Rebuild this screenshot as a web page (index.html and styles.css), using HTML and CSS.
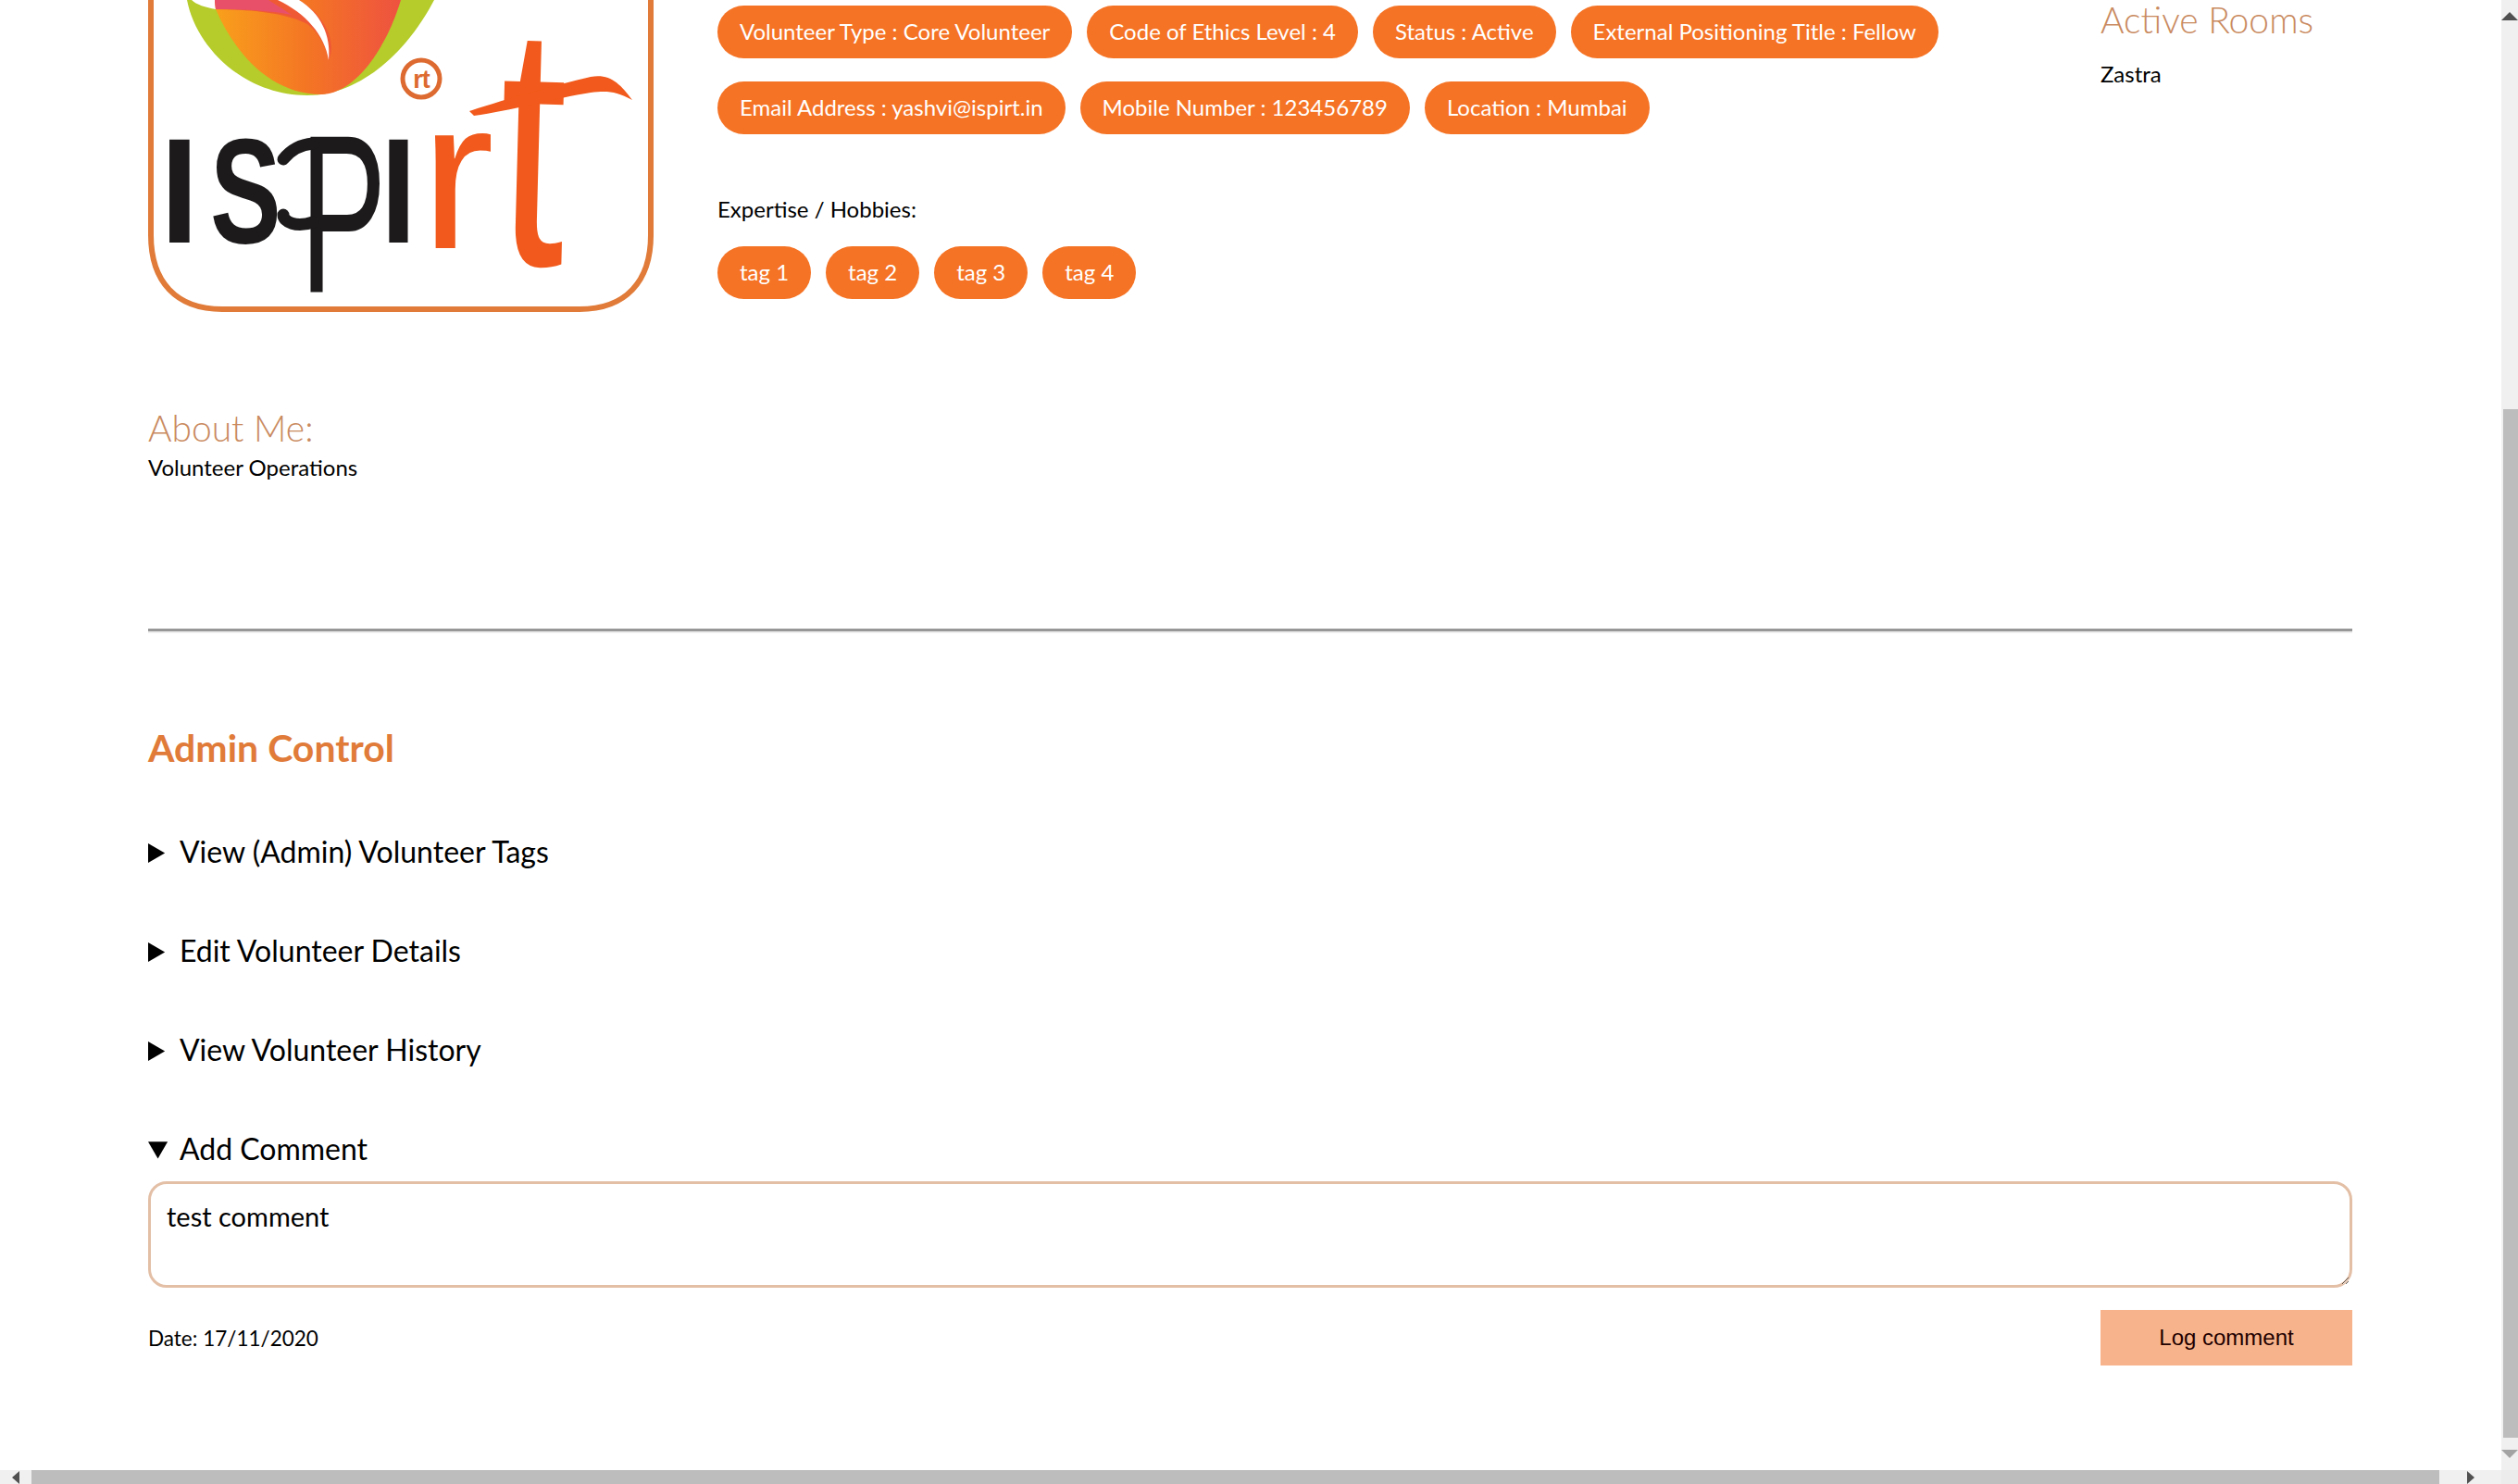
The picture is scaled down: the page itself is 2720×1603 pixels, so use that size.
FILE: index.html
```html
<!DOCTYPE html>
<html lang="en">
<head>
  <meta charset="UTF-8">
  <title>Volunteer Profile</title>
  <link rel="stylesheet" href="styles.css">
</head>
<body>

  <div class="window">
    <div class="viewport">
      <main class="page">

        <!-- Profile header -->
        <section class="profile">
          <svg class="logo" viewBox="0 0 546 337" aria-label="iSPIRT logo">
            <defs>
              <linearGradient id="petal" x1="0" y1="0" x2="1" y2="0">
                <stop offset="0" stop-color="#f9a01b"/>
                <stop offset="0.5" stop-color="#f47524"/>
                <stop offset="1" stop-color="#ee5240"/>
              </linearGradient>
            </defs>
            <path class="logo-frame" d="M3 -20 V254 C3 304 30 334 80 334 H466 C516 334 543 304 543 254 V-20"/>
            <path class="logo-green" d="M42 0 C52 52 104 103 172 103 C232 103 282 52 309 0 Z"/>
            <path class="logo-white" d="M47 0 C52 5 62 8 73 10 L82 0 Z"/>
            <path fill="url(#petal)" d="M72 0 L73 10 C92 54 130 102 187 102 C225 101 258 50 273 0 Z"/>
            <path class="logo-red" d="M72 0 L73 10 C110 10 150 14 172 26 C186 36 192 52 195 65 C205 45 190 16 163 0 Z"/>
            <path class="logo-pink" d="M72 0 L73 10 C100 10 130 11 155 16 L130 0 Z"/>
            <path class="logo-white" d="M140 0 C170 14 191 38 195 65 C198 38 186 14 163 0 Z"/>

            <circle class="logo-ring" cx="295" cy="85" r="20"/>
            <text class="logo-mark" x="295" y="95" text-anchor="middle">rt</text>

            <text class="logo-black" transform="translate(13 262) scale(1.5 1.62)">I</text>
            <text class="logo-black" transform="translate(67 262) scale(1.15 1.62)">S</text>
            <text class="logo-thin" transform="translate(164 315) scale(1.4 2.43)">P</text>
            <path class="logo-hook" d="M146 172 C154 162 166 156 178 155"/>
            <path class="logo-hook" d="M146 232 C146 240 160 246 178 240"/>
            <text class="logo-black" transform="translate(251 262) scale(1.4 1.62)">I</text>
            <text class="logo-orange" transform="translate(294 268) scale(2.4 2.3)">r</text>
            <text class="logo-orange" transform="translate(376 285) rotate(1.5) scale(2.6 3.74)">t</text>
            <path class="logo-swoosh" d="M347 120 C390 106 440 92 478 83 C498 79 510 90 523 108 C505 98 495 98 478 100 C440 106 390 120 352 125 Z"/>
          </svg>

          <div class="info">
            <div class="pills">
              <span class="pill">Volunteer Type : Core Volunteer</span>
              <span class="pill">Code of Ethics Level : 4</span>
              <span class="pill">Status : Active</span>
              <span class="pill">External Positioning Title : Fellow</span>
            </div>
            <div class="pills">
              <span class="pill">Email Address : yashvi@ispirt.in</span>
              <span class="pill">Mobile Number : 123456789</span>
              <span class="pill">Location : Mumbai</span>
            </div>
            <p class="expertise">Expertise / Hobbies:</p>
            <div class="pills">
              <span class="pill">tag 1</span>
              <span class="pill">tag 2</span>
              <span class="pill">tag 3</span>
              <span class="pill">tag 4</span>
            </div>
          </div>

          <aside class="rooms">
            <h3 class="light-title rooms-title">Active Rooms</h3>
            <p>Zastra</p>
          </aside>
        </section>

        <!-- About -->
        <section class="about">
          <h3 class="light-title">About Me:</h3>
          <p>Volunteer Operations</p>
        </section>

        <hr class="divider">

        <!-- Admin -->
        <section class="admin">
          <h2>Admin Control</h2>
          <details><summary>View (Admin) Volunteer Tags</summary></details>
          <details><summary>Edit Volunteer Details</summary></details>
          <details><summary>View Volunteer History</summary></details>
          <details open>
            <summary>Add Comment</summary>
            <textarea class="comment-box" rows="2">test comment</textarea>
            <div class="comment-foot">
              <span class="comment-date">Date: 17/11/2020</span>
              <button class="log-btn">Log comment</button>
            </div>
          </details>
        </section>

      </main>

      <div class="vscroll">
        <div class="arrow-box"><span class="arrow up"></span></div>
        <div class="vspace"></div>
        <div class="vthumb"></div>
        <div class="arrow-box"><span class="arrow down"></span></div>
      </div>
    </div>

    <div class="hscroll">
      <div class="harrow"><span class="arrow left"></span></div>
      <div class="hthumb"></div>
      <div class="harrow wide"><span class="arrow right"></span></div>
      <div class="corner"></div>
    </div>
  </div>

</body>
</html>
```

FILE: styles.css
```css
* {
  box-sizing: border-box;
}
html, body {
  margin: 0;
  padding: 0;
  height: 100%;
  overflow: hidden;
}
body {
  font-family: Lato, 'Open Sans', sans-serif;
  font-size: 24px;
  color: #000;
  background: #fff;
}
p {
  margin: 0;
}

/* Window and scrollbars */
.window {
  display: flex;
  flex-direction: column;
  height: 1603px;
}
.viewport {
  display: flex;
  height: 1588px;
}
.page {
  width: 2702px;
  padding: 0 161px 0 160px;
  overflow: hidden;
}
.vscroll {
  width: 18px;
  display: flex;
  flex-direction: column;
  background: #f0f0f0;
}
.vspace {
  height: 407px;
}
.vthumb {
  flex: 1;
  margin-left: 2px;
  background: #bdbdbd;
}
.arrow-box {
  height: 35px;
  display: flex;
  align-items: center;
  justify-content: center;
}
.hscroll {
  height: 15px;
  display: flex;
  background: #f0f0f0;
}
.harrow {
  width: 34px;
  display: flex;
  align-items: center;
  justify-content: center;
}
.harrow.wide {
  width: 67px;
}
.hthumb {
  width: 2601px;
  background: #bdbdbd;
}
.corner {
  width: 18px;
  background: #ececec;
}
.arrow {
  width: 0;
  height: 0;
  border-style: solid;
  border-color: transparent;
}
.arrow.up {
  border-width: 0 9px 9px;
  border-bottom-color: #505050;
}
.arrow.down {
  border-width: 9px 9px 0;
  border-top-color: #a3a3a3;
}
.arrow.left {
  border-width: 7px 8px 7px 0;
  border-right-color: #505050;
}
.arrow.right {
  border-width: 7px 0 7px 8px;
  border-left-color: #505050;
}

/* Profile header */
.profile {
  display: flex;
  align-items: flex-start;
}
.logo {
  width: 546px;
  height: 337px;
  flex: none;
  display: block;
}
.logo-frame {
  fill: none;
  stroke: #e07b39;
  stroke-width: 6;
}
.logo-green {
  fill: #b5cc2a;
}
.logo-white {
  fill: #fff;
}
.logo-red {
  fill: #ef5a35;
}
.logo-pink {
  fill: #e8506a;
}
.logo-ring {
  fill: none;
  stroke: #dd6a30;
  stroke-width: 5;
}
.logo-mark {
  font-family: 'Liberation Sans', sans-serif;
  font-size: 27px;
  font-weight: 700;
  letter-spacing: -1px;
  fill: #dd6a30;
}
.logo-black {
  font-family: 'Liberation Sans', sans-serif;
  font-size: 100px;
  font-weight: 700;
  fill: #1c1a1a;
}
.logo-thin {
  font-family: 'Liberation Sans', sans-serif;
  font-size: 100px;
  fill: #1c1a1a;
}
.logo-hook {
  fill: none;
  stroke: #1c1a1a;
  stroke-width: 13;
  stroke-linecap: round;
}
.logo-orange {
  font-family: 'Liberation Sans', sans-serif;
  font-size: 100px;
  fill: #f15a1c;
}
.logo-swoosh {
  fill: #f15a1c;
}
.info {
  margin-left: 69px;
  padding-top: 6px;
  width: 1494px;
}
.pills {
  display: flex;
  gap: 16px;
  margin-bottom: 25px;
}
.pill {
  background: #f57325;
  color: #fff;
  height: 57px;
  line-height: 56px;
  padding: 0 24px;
  border-radius: 29px;
  white-space: nowrap;
}
.expertise {
  margin-top: 65px;
  margin-bottom: 24px;
  line-height: 32px;
}
.rooms {
  flex: 1;
}
.rooms p {
  margin-top: 23px;
}
.light-title {
  margin: 0;
  font-size: 39px;
  font-weight: 300;
  line-height: 49px;
  color: #c98a60;
}
.rooms-title {
  line-height: 42px;
}

/* About */
.about {
  margin-top: 90px;
}
.about p {
  margin-top: 2px;
  line-height: 32px;
}
.divider {
  margin: 158px 0 0;
  height: 5px;
  border: 0;
  border-top: 3px solid #979797;
  border-bottom: 2px solid #eee;
}

/* Admin */
.admin h2 {
  margin: 96px 0 0;
  font-size: 41px;
  font-weight: 700;
  line-height: 55px;
  color: #e07b3a;
}
details {
  margin-top: 63px;
  font-size: 32px;
}
summary {
  line-height: 44px;
}
.comment-box {
  display: block;
  width: 100%;
  height: 115px;
  margin-top: 13px;
  padding: 17px 17px;
  border: 3px solid #e3bfa6;
  border-radius: 20px;
  font-family: inherit;
  font-size: 29px;
  color: #000;
  background: #fff;
  outline: none;
}
.comment-foot {
  display: flex;
  justify-content: space-between;
  align-items: center;
  margin-top: 24px;
  font-size: 24px;
}
.comment-date {
  font-size: 22.5px;
}
.log-btn {
  width: 272px;
  height: 60px;
  border: 0;
  background: #f7b48c;
  color: #200;
  font-family: 'Liberation Sans', sans-serif;
  font-size: 24px;
}
```
